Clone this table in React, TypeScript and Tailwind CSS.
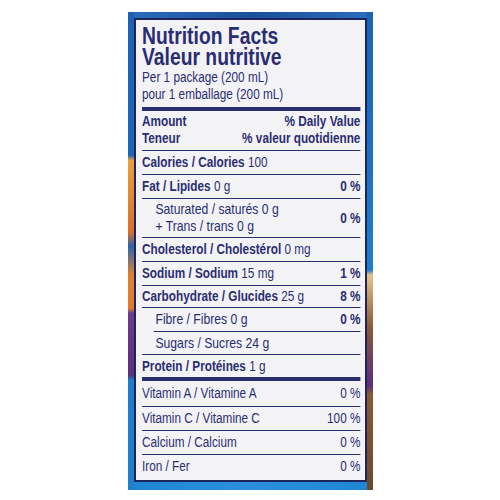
const font = { fontFamily: '"Liberation Sans", Arial, sans-serif' };

type Row = {
  label: string;
  amount?: string;
  value?: string;
  bold?: boolean;
  indent?: boolean;
  h: string;
  rule?: string;
};

const rows: Row[] = [
  { label: 'Calories / Calories', amount: '100', bold: true, h: 'h-[24px]' },
  { label: 'Fat / Lipides', amount: '0 g', value: '0 %', bold: true, h: 'h-[24px]' },
  { label: 'Saturated / saturés 0 g', amount: '+ Trans / trans 0 g', value: '0 %', indent: true, h: 'h-[39px]' },
  { label: 'Cholesterol / Cholestérol', amount: '0 mg', bold: true, h: 'h-[24px]' },
  { label: 'Sodium / Sodium', amount: '15 mg', value: '1 %', bold: true, h: 'h-[24px]' },
  { label: 'Carbohydrate / Glucides', amount: '25 g', value: '8 %', bold: true, h: 'h-[22px]' },
  { label: 'Fibre / Fibres 0 g', value: '0 %', indent: true, h: 'h-[24px]' },
  { label: 'Sugars / Sucres 24 g', indent: true, h: 'h-[23px]', rule: 'indent' },
  { label: 'Protein / Protéines', amount: '1 g', bold: true, h: 'h-[23px]' },
];

const vitamins = [
  { label: 'Vitamin A / Vitamine A', value: '0 %' },
  { label: 'Vitamin C / Vitamine C', value: '100 %' },
  { label: 'Calcium / Calcium', value: '0 %' },
  { label: 'Iron / Fer', value: '0 %' },
];

function NutrientRow({ row }: { row: Row }) {
  const ruleClass = row.rule === 'indent' ? 'ml-[14px]' : '';
  if (row.indent && !row.bold) {
    return (
      <div className={`${row.h} flex flex-col`}>
        <div className={`h-px bg-[#2b2f70] ${ruleClass}`} />
        <div className="flex flex-1 items-center justify-between pl-[16px]">
          <div className="flex flex-col leading-[17px] text-[14.5px]">
            <span>{row.label}</span>
            {row.amount && <span>{row.amount}</span>}
          </div>
          {row.value && <span className="font-bold">{row.value}</span>}
        </div>
      </div>
    );
  }
  return (
    <div className={`${row.h} flex flex-col`}>
      <div className="h-px bg-[#2b2f70]" />
      <div className="flex flex-1 items-center justify-between">
        <span>
          <span className="font-bold">{row.label}</span> {row.amount}
        </span>
        {row.value && <span className="font-bold">{row.value}</span>}
      </div>
    </div>
  );
}

export default function App() {
  return (
    <div className="w-[500px] h-[500px] bg-white flex justify-center pt-[12px]" style={font}>
      <div className="w-[245px] h-[478px] flex">
        {/* left edge of the package, colours from the photo behind */}
        <div className="w-[6px] shrink-0 bg-[linear-gradient(to_bottom,#1c62b4_0%,#1c66b8_30%,#e8a03c_31%,#d9702c_46%,#2a64a8_49%,#de8232_55%,#e07a2e_62%,#6b3b8e_63%,#5c2f80_76%,#1f7cc9_77%,#1f80cc_100%)]" />
        <div className="flex-1 min-w-0 flex flex-col bg-[#1c66b8]">
          <div className="h-[6px] bg-[linear-gradient(to_right,#2a6cbc,#1a4f9a_50%,#2a6cbc)]" />
          <div className="flex-1 min-w-0 border-2 border-[#1f245c] bg-[#f3f3f6] text-[#2a2d72] text-[14px] pl-[6px] pr-[4px] flex flex-col">
            {/* condensed face: Arial widths narrowed */}
            <div className="w-[260px] shrink-0 origin-left scale-x-[0.84] flex flex-col">
              <div className="pt-[6px] text-[23px] font-bold leading-[21px]">
                <div>Nutrition Facts</div>
                <div>Valeur nutritive</div>
              </div>
              <div className="leading-[17px] mt-[1px]">
                <div>Per 1 package (200 mL)</div>
                <div>pour 1 emballage (200 mL)</div>
              </div>
              <div className="h-[4px] bg-[#2b2f70] mt-[4px]" />
              <div className="leading-[17px] pt-[2px] pb-[3px] font-bold">
                <div className="flex justify-between">
                  <span>Amount</span>
                  <span>% Daily Value</span>
                </div>
                <div className="flex justify-between">
                  <span>Teneur</span>
                  <span>% valeur quotidienne</span>
                </div>
              </div>
              {rows.map((r, i) => (
                <NutrientRow key={i} row={r} />
              ))}
              <div className="h-[4px] bg-[#2b2f70]" />
              {vitamins.map((v, i) => (
                <div key={i} className={`${i === 0 ? 'h-[25px]' : 'h-[24px]'} flex flex-col`}>
                  {i > 0 && <div className="h-px bg-[#2b2f70]" />}
                  <div className="flex flex-1 items-center justify-between">
                    <span>{v.label}</span>
                    <span>{v.value}</span>
                  </div>
                </div>
              ))}
            </div>
          </div>
          <div className="h-[8px] bg-[linear-gradient(to_right,#1f86d4,#2a90dc_50%,#1f86d4)]" />
        </div>
        <div className="w-[6px] shrink-0 bg-[linear-gradient(to_bottom,#1c62b4_0%,#1f7cd0_54%,#e6c58a_55%,#8a5a34_66%,#5b2d7f_78%,#8a5a34_80%,#6a4a2c_100%)]" />
      </div>
    </div>
  );
}
